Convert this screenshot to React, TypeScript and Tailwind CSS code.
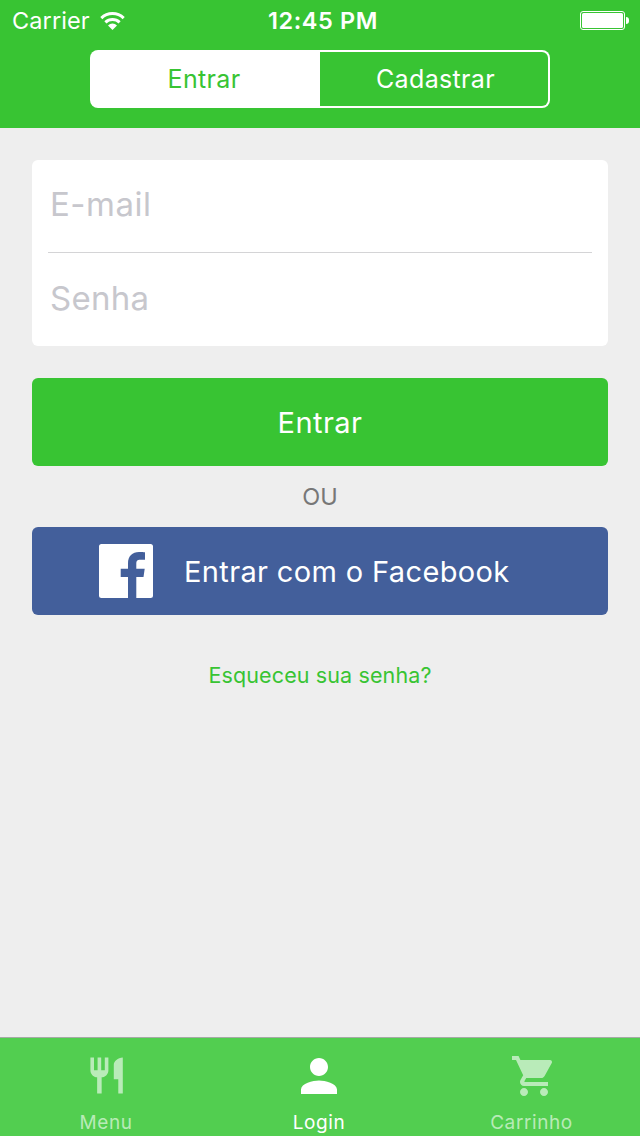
import React, { useState } from "react";
import clsx from "clsx";

type Mode = "entrar" | "cadastrar";

const tabs = [
  {
    label: "Menu",
    width: "w-[212px]",
    icon: "ml-0.5 size-[43.2px]",
    path: "M11 9H9V2H7v7H5V2H3v7c0 2.12 1.66 3.84 3.75 3.97V22h2.5v-9.03C11.34 12.84 13 11.12 13 9V2h-2v7zm5-3v8h2.5v8H21V2c-2.76 0-5 2.24-5 4z",
  },
  {
    label: "Login",
    width: "w-[214px]",
    icon: "size-[54px]",
    path: "M12 12c2.21 0 4-1.79 4-4s-1.79-4-4-4-4 1.79-4 4 1.79 4 4 4zm0 2c-2.67 0-8 1.34-8 4v2h16v-2c0-2.66-5.33-4-8-4z",
  },
  {
    label: "Carrinho",
    width: "w-[211px]",
    icon: "ml-[5px] size-12",
    path: "M7 18c-1.1 0-1.99.9-1.99 2S5.9 22 7 22s2-.9 2-2-.9-2-2-2zM1 2v2h2l3.6 7.59-1.35 2.45c-.16.28-.25.61-.25.96 0 1.1.9 2 2 2h12v-2H7.42c-.14 0-.25-.11-.25-.25l.03-.12.9-1.63h7.45c.75 0 1.41-.41 1.75-1.03l3.58-6.49c.08-.14.12-.31.12-.48 0-.55-.45-1-1-1H5.21l-.94-2H1zm16 16c-1.1 0-1.99.9-1.99 2s.89 2 1.99 2 2-.9 2-2-.9-2-2-2z",
  },
];

function StatusBar() {
  return (
    <div className="grid h-10 grid-cols-3 items-center text-[23.5px] leading-10 text-white">
      <div className="flex items-center pl-3">
        <span className="w-[88px] pt-px tracking-[0.1px]">Carrier</span>
        <svg className="h-[18px] w-[26px]" viewBox="0 0 26 18" fill="none">
          <path d="M1.3 6.1a16 16 0 0 1 22.4 0M5.4 10.3a10.2 10.2 0 0 1 14.2 0" stroke="#fff" strokeWidth="3" />
          <path d="M12.5 17.9l-4.5-4.4a6.3 6.3 0 0 1 9 0z" fill="#fff" />
        </svg>
      </div>
      <span className="pt-px pl-1.5 text-center font-semibold tracking-[0.6px]">12:45 PM</span>
      <div className="flex items-center justify-end gap-px pr-[11px]">
        <div className="h-[19px] w-[45px] rounded-[3px] border border-white p-px">
          <div className="h-full w-full rounded-[1.5px] bg-white" />
        </div>
        <div className="h-[7px] w-[3px] rounded-r-full bg-white" />
      </div>
    </div>
  );
}

function ModeSwitch({ mode, onChange }: { mode: Mode; onChange: (mode: Mode) => void }) {
  const item = "pt-px tracking-[0.35px]";
  const active = "bg-white text-[#38c433]";
  const inactive = "bg-[#38c433] text-white";

  return (
    <div className="mx-auto mt-2.5 grid h-[58px] w-[460px] grid-cols-2 rounded-lg bg-white p-0.5 text-[25px]">
      <button
        onClick={() => onChange("entrar")}
        className={clsx(item, "rounded-l-md pr-1", mode === "entrar" ? active : inactive)}
      >
        Entrar
      </button>
      <button
        onClick={() => onChange("cadastrar")}
        className={clsx(item, "rounded-r-md pl-[3px]", mode === "cadastrar" ? active : inactive)}
      >
        Cadastrar
      </button>
    </div>
  );
}

function FacebookLogo() {
  return (
    <svg className="size-[54px] shrink-0" viewBox="0 0 54 54" fill="#fff">
      <path d="M2.5 0h49A2.5 2.5 0 0 1 54 2.5v49a2.5 2.5 0 0 1-2.5 2.5H37.3V33h7.2l1.2-8.3h-8.4v-4.9c0-2.7.8-4.1 4-4.1H46V8.3C45 8.2 42.5 8 40 8c-6.6 0-11 4-11 11.2v5.5h-7.3V33H29v21H2.5A2.5 2.5 0 0 1 0 51.5v-49A2.5 2.5 0 0 1 2.5 0z" />
    </svg>
  );
}

export default function App() {
  const [mode, setMode] = useState<Mode>("entrar");
  const [tab, setTab] = useState("Login");

  return (
    <div className="flex h-[1136px] w-[640px] flex-col overflow-hidden bg-[#eeeeee] font-['Inter','Liberation_Sans',sans-serif]">
      <header className="h-32 shrink-0 bg-[#38c433]">
        <StatusBar />
        <ModeSwitch mode={mode} onChange={setMode} />
      </header>

      <main className="flex flex-1 flex-col px-8 pt-8">
        <div className="flex h-[186px] flex-col rounded-md bg-white px-4 text-[33px]">
          <input
            type="email"
            placeholder="E-mail"
            className="h-[93px] border-b border-[#d4d4d6] px-0.5 pb-1 tracking-[0.5px] outline-none placeholder:text-[#c7c7cd]"
          />
          <input
            type="password"
            placeholder="Senha"
            className="h-[93px] px-0.5 pb-1 tracking-[0.3px] outline-none placeholder:text-[#c7c7cd]"
          />
        </div>

        <button className="mt-8 h-[88px] rounded-md bg-[#38c433] pt-0.5 text-[29px] tracking-[0.45px] text-white">
          Entrar
        </button>
        <p className="h-[61px] text-center text-[23.5px] leading-[61px] text-[#777777]">OU</p>
        <button className="flex h-[88px] items-center gap-[31px] rounded-md bg-[#435f9b] pl-[67px] text-[29px] tracking-[0.36px] text-white">
          <FacebookLogo />
          <span className="pt-0.5">Entrar com o Facebook</span>
        </button>
        <a href="#" className="mt-11 self-center text-[21.5px] leading-8 tracking-[0.12px] text-[#38c433]">
          Esqueceu sua senha?
        </a>
      </main>

      <nav className="flex h-[99px] shrink-0 border-t border-[#a5aaa5] bg-[#52ce50] text-[19px] leading-6 tracking-[0.6px]">
        {tabs.map(({ label, width, icon, path }) => (
          <button
            key={label}
            onClick={() => setTab(label)}
            className={clsx(
              "flex flex-col items-center",
              width,
              tab === label ? "text-white" : "text-white/60"
            )}
          >
            <span className="flex h-[73px] items-center pt-0.5">
              <svg className={icon} viewBox="0 0 24 24" fill="currentColor">
                <path d={path} />
              </svg>
            </span>
            {label}
          </button>
        ))}
      </nav>
    </div>
  );
}
